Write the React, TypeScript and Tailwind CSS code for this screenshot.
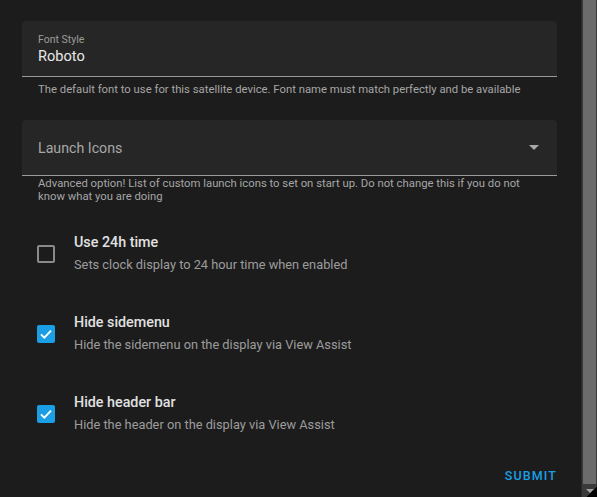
interface Toggle {
  title: string
  description: string
  checked: boolean
}

const toggles: Toggle[] = [
  { title: 'Use 24h time', description: 'Sets clock display to 24 hour time when enabled', checked: false },
  { title: 'Hide sidemenu', description: 'Hide the sidemenu on the display via View Assist', checked: true },
  { title: 'Hide header bar', description: 'Hide the header on the display via View Assist', checked: true },
]

function Checkbox({ checked }: { checked: boolean }) {
  if (!checked) {
    return <div className="h-[18px] w-[18px] rounded-[2px] border-2 border-[#8a8a8a]" />
  }
  return (
    <div className="flex h-[18px] w-[18px] items-center justify-center rounded-[2px] bg-[#1a9ee6]">
      <svg viewBox="0 0 24 24" className="h-[16px] w-[16px]">
        <path d="M4.5 12.5 9.5 17.5 19.5 7" fill="none" stroke="#fff" strokeWidth="3" />
      </svg>
    </div>
  )
}

export default function App() {
  return (
    <div className="flex h-[497px] w-[597px] overflow-hidden bg-[#1c1c1c] font-['Roboto',sans-serif]">
      <div className="flex w-[581px] flex-col pl-[22px] pr-[24px] pt-[21px]">
        {/* Font style field */}
        <div className="flex h-[56px] flex-col rounded-t-[4px] border-b border-[#9a9a9a] bg-[#262626] px-[16px] pt-[12px]">
          <span className="text-[10.5px] leading-[13px] text-[#9c9c9c]">Font Style</span>
          <span className="mt-[1px] text-[14.6px] leading-[18px] text-[#e8e8e8]">Roboto</span>
        </div>
        <p className="mt-[6px] px-[16px] text-[11.3px] leading-[13px] text-[#a6a6a6]">
          The default font to use for this satellite device. Font name must match perfectly and be available
        </p>

        {/* Launch icons select */}
        <div className="mt-[24px] flex h-[56px] items-center justify-between rounded-t-[4px] border-b border-[#9a9a9a] bg-[#262626] pl-[16px] pr-[18px]">
          <span className="pt-[2px] text-[14.2px] text-[#a8a8a8]">Launch Icons</span>
          <svg viewBox="0 0 10 5" className="h-[5px] w-[10px]">
            <path d="M0 0h10L5 5z" fill="#a8a8a8" />
          </svg>
        </div>
        <p className="mt-[1px] px-[16px] text-[11.3px] leading-[13px] text-[#a6a6a6]">
          Advanced option! List of custom launch icons to set on start up. Do not change this if you do not know what you are doing
        </p>

        {/* Toggles */}
        <div className="mt-[30px] flex flex-col gap-[40px]">
          {toggles.map((t) => (
            <div key={t.title} className="flex items-start">
              <div className="flex w-[52px] justify-start pl-[15px] pt-[12px]">
                <Checkbox checked={t.checked} />
              </div>
              <div className="flex flex-col">
                <span className="text-[14.3px] font-medium leading-[18px] text-[#e1e1e1]">{t.title}</span>
                <span className="mt-[6px] text-[12.8px] leading-[16px] text-[#9c9c9c]">{t.description}</span>
              </div>
            </div>
          ))}
        </div>

        <div className="mt-auto flex justify-end pb-[11px]">
          <button className="text-[12.5px] font-medium tracking-[1.1px] text-[#1a9ee6]">SUBMIT</button>
        </div>
      </div>

      {/* Scrollbar */}
      <div className="relative flex w-[16px] flex-col border-l border-[#2a2a2a] bg-[#3a3a3a]">
        <div className="ml-[1px] h-[484px] w-[13px] bg-[#6b6b6b]" />
        <div className="flex flex-1 items-center justify-center">
          <svg viewBox="0 0 8 4" className="h-[4px] w-[8px]">
            <path d="M0 0h8L4 4z" fill="#a3a3a3" />
          </svg>
        </div>
        <div className="absolute bottom-0 right-0 h-[10px] w-[10px] bg-[linear-gradient(135deg,transparent_50%,#000_50%)]" />
      </div>
    </div>
  )
}
